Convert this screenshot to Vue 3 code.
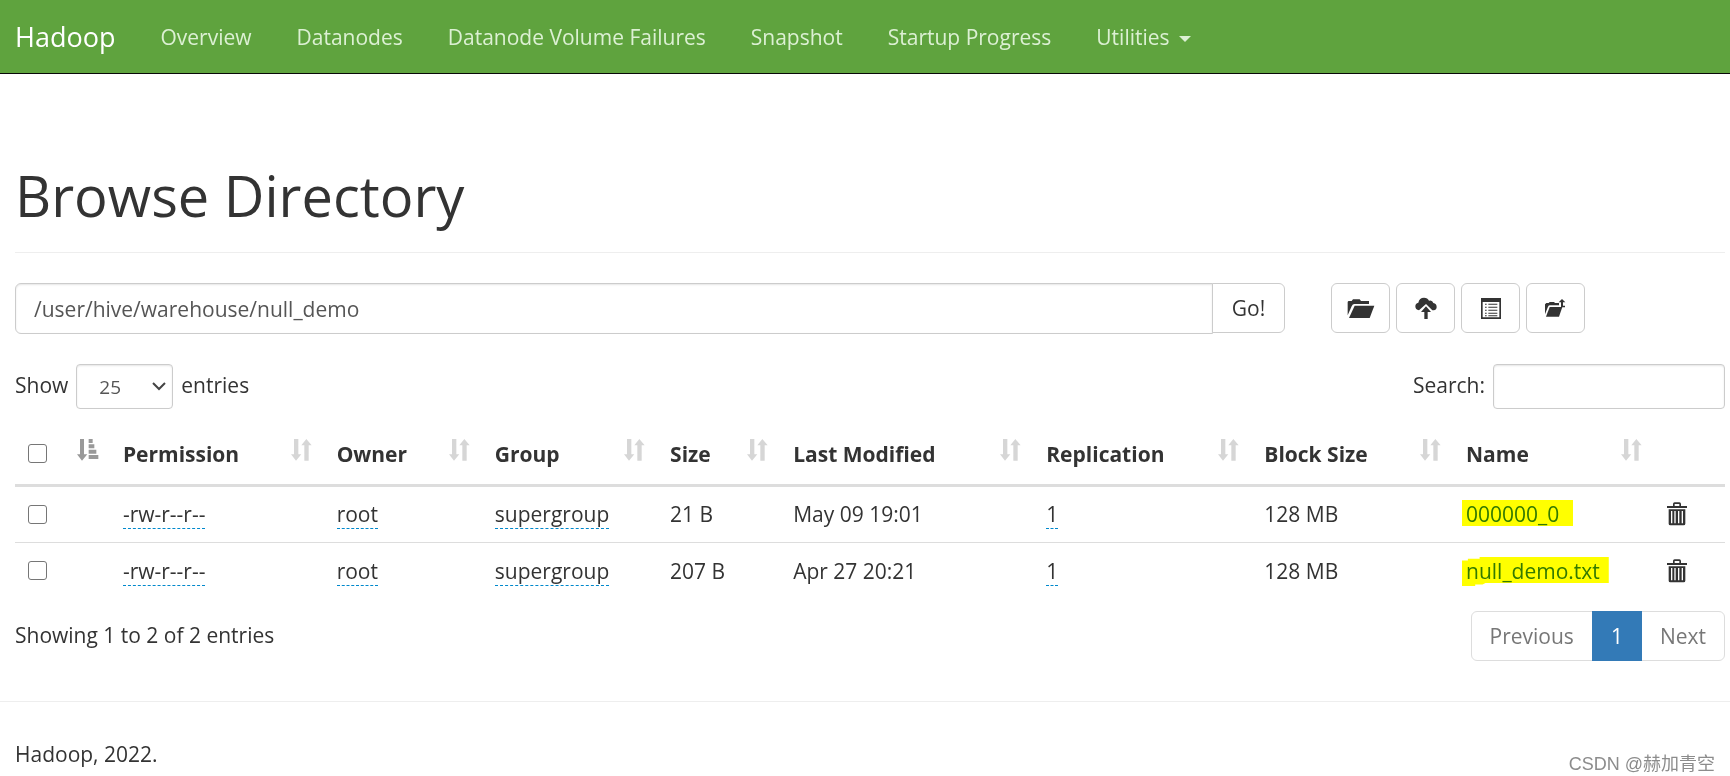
<script setup>
import { ref } from 'vue'

const navItems = ['Overview', 'Datanodes', 'Datanode Volume Failures', 'Snapshot', 'Startup Progress']
const columns = [
  { label: 'Permission', cls: 'c-perm' },
  { label: 'Owner', cls: 'c-owner' },
  { label: 'Group', cls: 'c-group' },
  { label: 'Size', cls: 'c-size' },
  { label: 'Last Modified', cls: 'c-mod' },
  { label: 'Replication', cls: 'c-rep' },
  { label: 'Block Size', cls: 'c-block' },
  { label: 'Name', cls: 'c-name' },
]
const files = [
  { perm: '-rw-r--r--', owner: 'root', group: 'supergroup', size: '21 B', modified: 'May 09 19:01', replication: '1', block: '128 MB', name: '000000_0', mark: 'mark-a', shape: '0,0 100,0 100,100 0,100' },
  { perm: '-rw-r--r--', owner: 'root', group: 'supergroup', size: '207 B', modified: 'Apr 27 20:21', replication: '1', block: '128 MB', name: 'null_demo.txt', mark: 'mark-b', shape: '0,12 4,12 4,6 12,6 12,0 100,0 100,90 16,90 14,95 9,95 9,100 0,100' },
]
const path = ref('/user/hive/warehouse/null_demo')
const pageSize = ref('25')
const search = ref('')
</script>

<template>
  <div class="page">
    <header class="navbar">
      <a class="brand" href="#">Hadoop</a>
      <nav class="nav">
        <a v-for="item in navItems" :key="item" href="#">{{ item }}</a>
        <a href="#">Utilities <span class="caret"></span></a>
      </nav>
    </header>

    <main class="content">
      <h1>Browse Directory</h1>

      <div class="toolbar">
        <form class="path-group" @submit.prevent>
          <input v-model="path" type="text" aria-label="Directory path" />
          <button type="submit">Go!</button>
        </form>
        <div class="actions">
          <button type="button" aria-label="Create directory">
            <svg width="28" height="22" viewBox="0 0 84 66">
              <path d="M2 55V16q0-4 4-4h8l4-5h20l4 5h24v9H22q-5 0-8 7z" />
              <path d="M23 26H82L68 63H6z" />
            </svg>
          </button>
          <button type="button" aria-label="Upload files">
            <svg width="22" height="22" viewBox="0 0 66 66">
              <path d="M12 40Q1 38 1 28q0-9 9-11Q13 2 27 2q11 0 15 9 10-3 13 7 10 2 10 12 0 9-9 10h-4L33 21z" />
              <path d="M33 28 48 45H38V66H28V45H18z" />
            </svg>
          </button>
          <button type="button" aria-label="Cut and paste">
            <svg width="20" height="21" viewBox="0 0 60 63">
              <path fill-rule="evenodd" d="M0 0H60V63H0zM5 12V58H55V12z" />
              <path d="M12 17h5v3h-5zm0 9h5v3h-5zm0 9h5v3h-5zm0 9h5v3h-5zm0 8h5v3h-5zM22 17h27v3H22zm0 9h27v3H22zm0 9h27v3H22zm0 9h27v3H22zm0 8h27v3H22z" />
            </svg>
          </button>
          <button type="button" aria-label="Parent directory">
            <svg width="21" height="18" viewBox="0 0 63 54">
              <path d="M0 46V16l4-4h7l3-3h13l3 3h12v7H15q-4 0-6 4z" />
              <path d="M14 24H52L42 53H3z" />
              <path d="M51 0 61 10H54V20h6v5H48V10H41z" />
            </svg>
          </button>
        </div>
      </div>

      <div class="filters">
        <label class="length">
          Show
          <span class="select-wrap">
            <select v-model="pageSize">
              <option>25</option>
              <option>50</option>
              <option>100</option>
            </select>
            <svg class="chevron" width="14" height="9" viewBox="0 0 14 9"><path d="M1 1 7 7 13 1" /></svg>
          </span>
          entries
        </label>
        <label class="search">Search: <input v-model="search" type="search" /></label>
      </div>

      <table>
        <thead>
          <tr>
            <th class="c-check">
              <div class="head">
                <input type="checkbox" aria-label="Select all" />
                <svg class="sorted" width="22" height="22" viewBox="0 0 66 66">
                  <path d="M9 0H21V46H31L15 65 0 46H9zM35 0H47V12H35zM35 16H52V28H35zM35 32H58V44H35zM35 48H64V60H35z" />
                </svg>
              </div>
            </th>
            <th v-for="c in columns" :key="c.label" :class="c.cls">
              <div class="head">
                <span>{{ c.label }}</span>
                <svg width="22" height="22" viewBox="0 0 66 66">
                  <path d="M9 0H22V46H31L15 65 0 46H9zM46 0 62 19H53V65H40V19H31z" />
                </svg>
              </div>
            </th>
            <th class="c-del"></th>
          </tr>
        </thead>
        <tbody>
          <tr v-for="f in files" :key="f.name">
            <td><input type="checkbox" :aria-label="'Select ' + f.name" /></td>
            <td><span class="editable">{{ f.perm }}</span></td>
            <td><span class="editable">{{ f.owner }}</span></td>
            <td><span class="editable">{{ f.group }}</span></td>
            <td>{{ f.size }}</td>
            <td>{{ f.modified }}</td>
            <td><span class="editable">{{ f.replication }}</span></td>
            <td>{{ f.block }}</td>
            <td>
              <a class="file" href="#">{{ f.name }}<svg class="mark" :class="f.mark" viewBox="0 0 100 100" preserveAspectRatio="none"><polygon :points="f.shape" /></svg></a>
            </td>
            <td>
              <button class="trash" type="button" :aria-label="'Delete ' + f.name">
                <svg width="20" height="24" viewBox="0 0 60 72">
                  <path fill-rule="evenodd" d="M0 12H18V6q0-5 5-5H37q5 0 5 5V12H60V18H0zM23 12H37V6H23zM5 22H55V65q0 5-5 5H10q-5 0-5-5zM12 27V64H16V27zM22 27V64H26V27zM33 27V64H37V27zM44 27V64H48V27z" />
                </svg>
              </button>
            </td>
          </tr>
        </tbody>
      </table>

      <div class="table-foot">
        <p>Showing 1 to 2 of 2 entries</p>
        <nav class="pagination" aria-label="Pages">
          <a href="#">Previous</a>
          <a href="#" class="active">1</a>
          <a href="#">Next</a>
        </nav>
      </div>
    </main>

    <footer>
      <p>Hadoop, 2022.</p>
      <span class="watermark">CSDN @赫加青空</span>
    </footer>
  </div>
</template>

<style>
body {
  background: #fff;
}
</style>

<style scoped>
.page {
  font-family: "Open Sans", "Noto Sans", "Noto Sans CJK SC", sans-serif;
  font-size: 21px;
  line-height: 32px;
  color: #333;
}
.page *,
.page *::before {
  box-sizing: border-box;
}
a {
  color: #337ab7;
  text-decoration: none;
}
p {
  margin: 0;
}
input,
select,
button {
  font: inherit;
  color: inherit;
  margin: 0;
}
.navbar {
  display: flex;
  align-items: center;
  height: 74px;
  padding: 0 15px;
  background: #5fa33e;
  border-bottom: 1px solid #080808;
}
.brand {
  color: #fff;
  font-size: 27px;
  margin-right: 45px;
}
.nav {
  display: flex;
  gap: 45px;
}
.nav a {
  color: #dcf0d3;
}
.caret {
  display: inline-block;
  margin-left: 4px;
  vertical-align: middle;
  border: 6px solid transparent;
  border-top-color: #dcf0d3;
  border-bottom: 0;
}
.content {
  padding: 84px 5px 0 15px;
}
h1 {
  margin: 0;
  padding-bottom: 20px;
  border-bottom: 1px solid #eee;
  font-size: 56px;
  font-weight: 400;
  line-height: 74px;
}
.toolbar {
  display: grid;
  grid-template-columns: 1270fr 394fr;
  gap: 46px;
  margin-top: 30px;
}
.path-group {
  display: flex;
}
.path-group input {
  flex: 1;
  min-width: 0;
  height: 51px;
  padding: 0 18px;
  color: #555;
  border: 1px solid #ccc;
  border-radius: 6px 0 0 6px;
  box-shadow: inset 0 1px 2px rgba(0, 0, 0, 0.1);
}
.path-group button,
.actions button {
  height: 50px;
  background: #fff;
  border: 1px solid #ccc;
  border-radius: 6px;
}
.path-group button {
  width: 73px;
  margin-left: -1px;
  padding: 0;
  border-radius: 0 6px 6px 0;
}
.actions {
  display: flex;
  gap: 6px;
}
.actions button {
  display: flex;
  align-items: center;
  justify-content: center;
  width: 59px;
  padding: 0;
}
.actions svg,
.trash svg {
  fill: #333;
}
.filters {
  display: flex;
  justify-content: space-between;
  margin-top: 30px;
}
.filters label {
  display: flex;
  gap: 8px;
  line-height: 42px;
}
.select-wrap {
  position: relative;
}
.filters select,
.filters input {
  height: 45px;
  border: 1px solid #ccc;
  border-radius: 4px;
  background: #fff;
  box-shadow: inset 0 1px 2px rgba(0, 0, 0, 0.1);
}
.filters select {
  appearance: none;
  width: 97px;
  padding: 0 22px;
  font-size: 19px;
  color: #555;
}
.filters input {
  width: 232px;
}
.chevron {
  position: absolute;
  right: 7px;
  top: 18px;
  fill: none;
  stroke: #444;
  stroke-width: 2;
  pointer-events: none;
}
table {
  width: 100%;
  margin-top: 15px;
  border-collapse: collapse;
  table-layout: fixed;
}
.c-check { width: 5.55%; }
.c-perm { width: 12.5%; }
.c-owner { width: 9.25%; }
.c-group { width: 10.25%; }
.c-size { width: 7.2%; }
.c-mod { width: 14.8%; }
.c-rep { width: 12.75%; }
.c-block { width: 11.8%; }
.c-name { width: 11.75%; }
.c-del { width: 4.15%; }
th {
  height: 61px;
  padding: 0 11px 0 13px;
  text-align: left;
  font-weight: 700;
  border-bottom: 3px solid #ddd;
  white-space: nowrap;
}
td {
  height: 57px;
  padding: 0 13px;
  white-space: nowrap;
}
tbody tr + tr td {
  border-top: 1px solid #ddd;
}
.head {
  display: flex;
  align-items: center;
  justify-content: space-between;
}
.head svg {
  fill: #d6d6d6;
  margin-bottom: 7px;
}
.head .sorted {
  fill: #999;
}
input[type="checkbox"] {
  appearance: none;
  display: block;
  width: 19px;
  height: 19px;
  border: 1px solid #767676;
  border-radius: 3px;
  background: #fff;
}
.editable {
  display: inline-block;
  line-height: 28px;
  border-bottom: 1px dashed #0088cc;
}
.file {
  position: relative;
}
.mark {
  position: absolute;
  left: -4px;
  top: 0;
  height: 26px;
  fill: #ff0;
  mix-blend-mode: multiply;
}
.mark-a {
  width: calc(100% + 18px);
}
.mark-b {
  width: calc(100% + 13px);
  height: 29px;
}
.trash {
  display: block;
  padding: 0;
  border: 0;
  background: none;
  line-height: 0;
}
.table-foot {
  display: flex;
  justify-content: space-between;
  margin-top: 12px;
}
.table-foot p {
  line-height: 48px;
}
.pagination {
  display: flex;
  border: 1px solid #ddd;
  border-radius: 6px;
}
.pagination a {
  padding: 0 18px;
  line-height: 48px;
  color: #777;
}
.pagination .active {
  margin: -1px 0;
  padding: 1px 19px;
  color: #fff;
  background: #337ab7;
}
footer {
  display: flex;
  align-items: center;
  justify-content: space-between;
  margin-top: 40px;
  padding: 30px 15px 12px;
  border-top: 1px solid #eee;
}
.watermark {
  margin-top: 20px;
  font-family: "Liberation Sans", "Noto Sans CJK SC", sans-serif;
  font-size: 18px;
  line-height: 24px;
  color: #8c8c8c;
}
</style>
